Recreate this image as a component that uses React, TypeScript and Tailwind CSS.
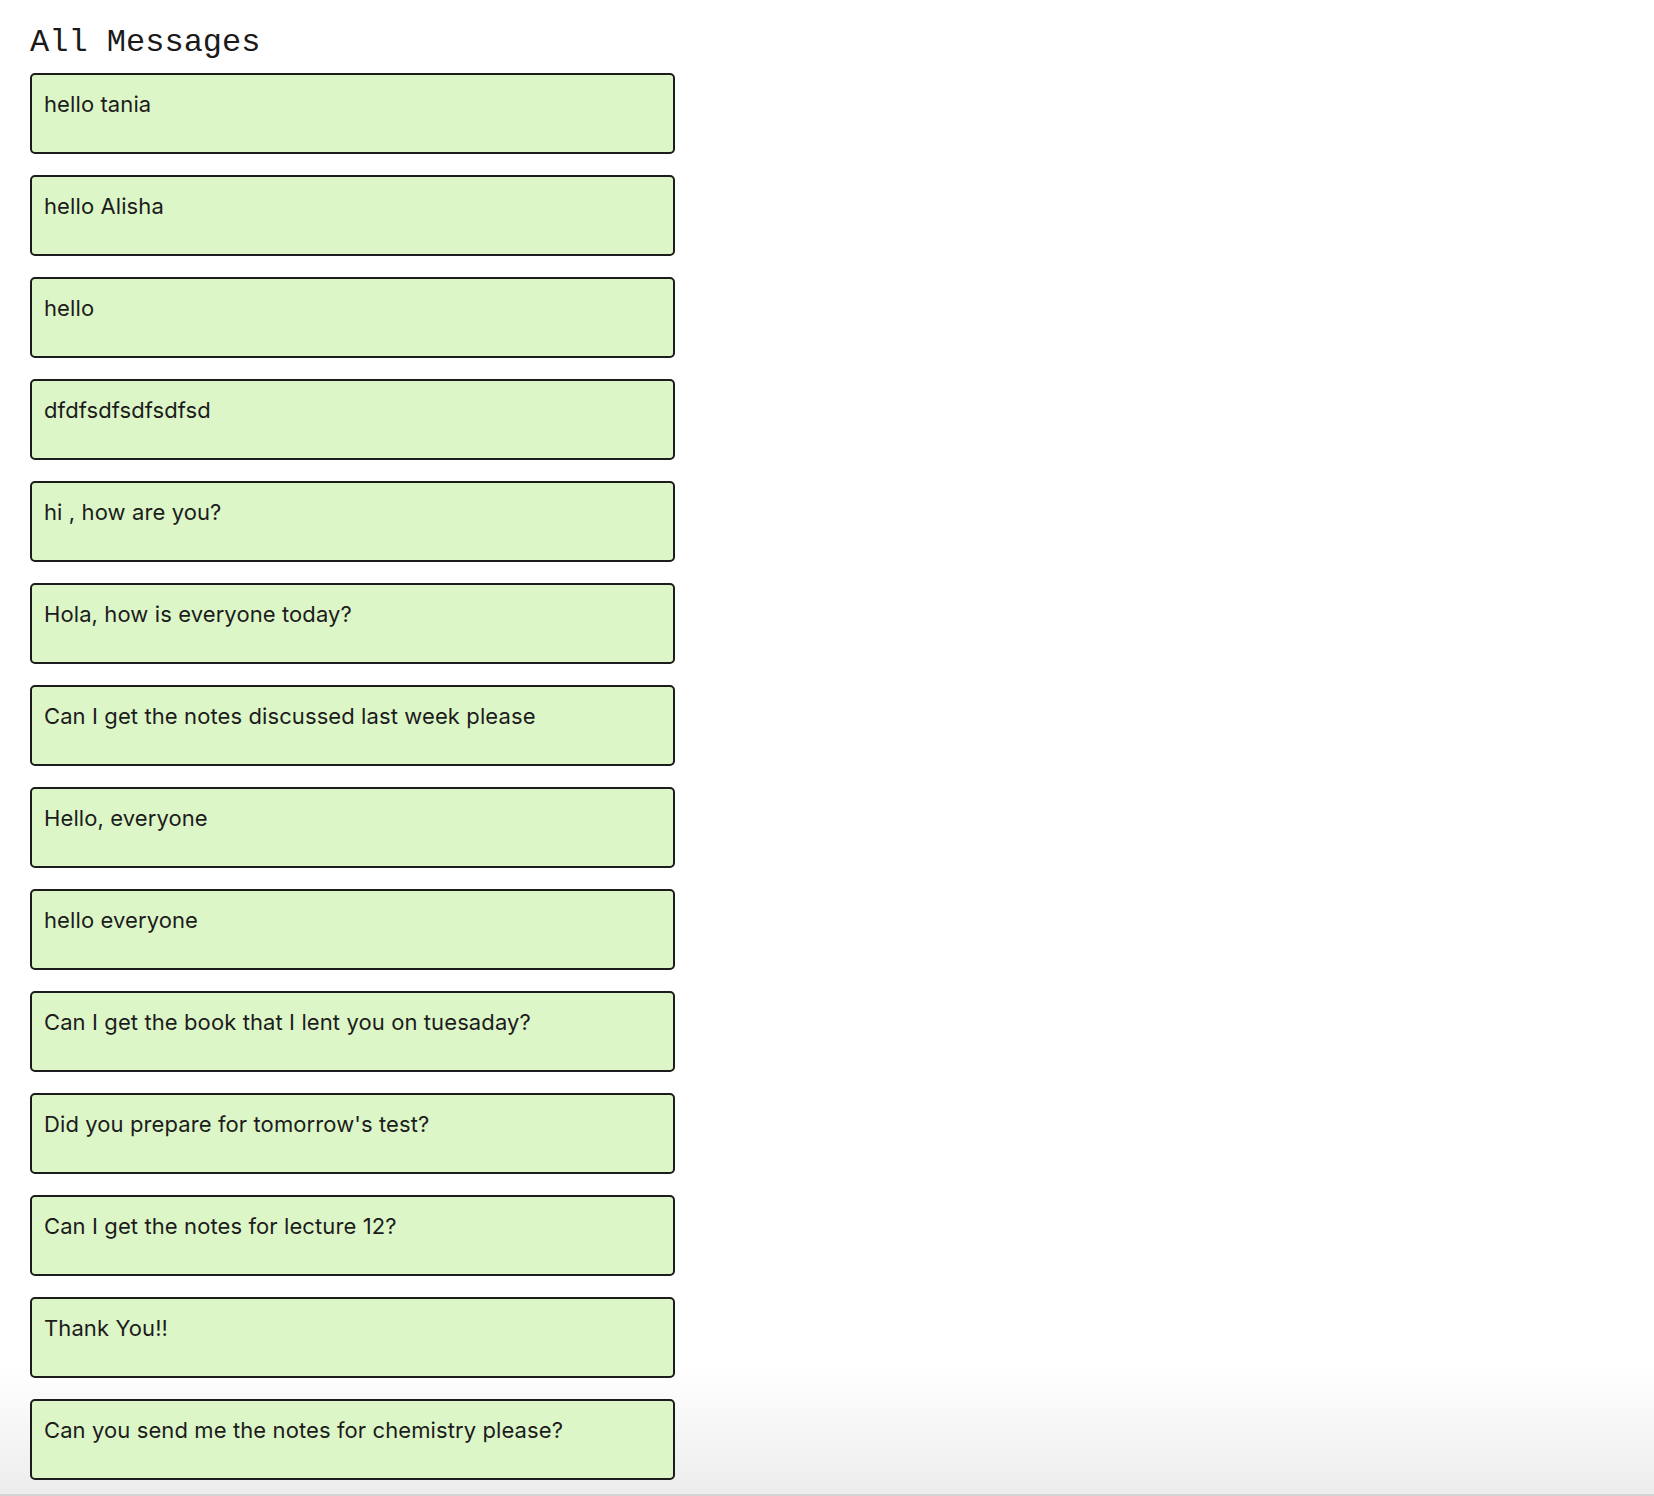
import React from "react";

const messages = [
  "hello tania",
  "hello Alisha",
  "hello",
  "dfdfsdfsdfsdfsd",
  "hi , how are you?",
  "Hola, how is everyone today?",
  "Can I get the notes discussed last week please",
  "Hello, everyone",
  "hello everyone",
  "Can I get the book that I lent you on tuesaday?",
  "Did you prepare for tomorrow's test?",
  "Can I get the notes for lecture 12?",
  "Thank You!!",
  "Can you send me the notes for chemistry please?",
];

export default function App() {
  return (
    <div className="relative h-[1496px] w-[1654px] overflow-hidden bg-white">
      <div className="pointer-events-none absolute bottom-0 left-0 h-[130px] w-full bg-gradient-to-b from-[rgba(255,255,255,0)] to-[#ececec]" />
      <div className="relative pl-[30px] pt-[23px]">
        <h1 className="text-[32px] leading-[40px] text-[#1a1a1a] font-['Liberation_Mono','Courier_New',monospace]">
          All Messages
        </h1>
        <div className="mt-[10px] flex w-[645px] flex-col gap-[21px]">
          {messages.map((m, i) => (
            <div
              key={i}
              className="h-[81px] rounded-[5px] border-2 border-[#1c1c1c] bg-[#dcf6c8] px-[12px] pt-[14px] text-[22px] leading-[30px] tracking-[0.1px] text-[#1c1c1c] font-['Inter','Noto_Sans',sans-serif]"
            >
              {m}
            </div>
          ))}
        </div>
      </div>
      <div className="pointer-events-none absolute bottom-0 left-0 h-[2px] w-full bg-[#d4d4d4]" />
    </div>
  );
}
